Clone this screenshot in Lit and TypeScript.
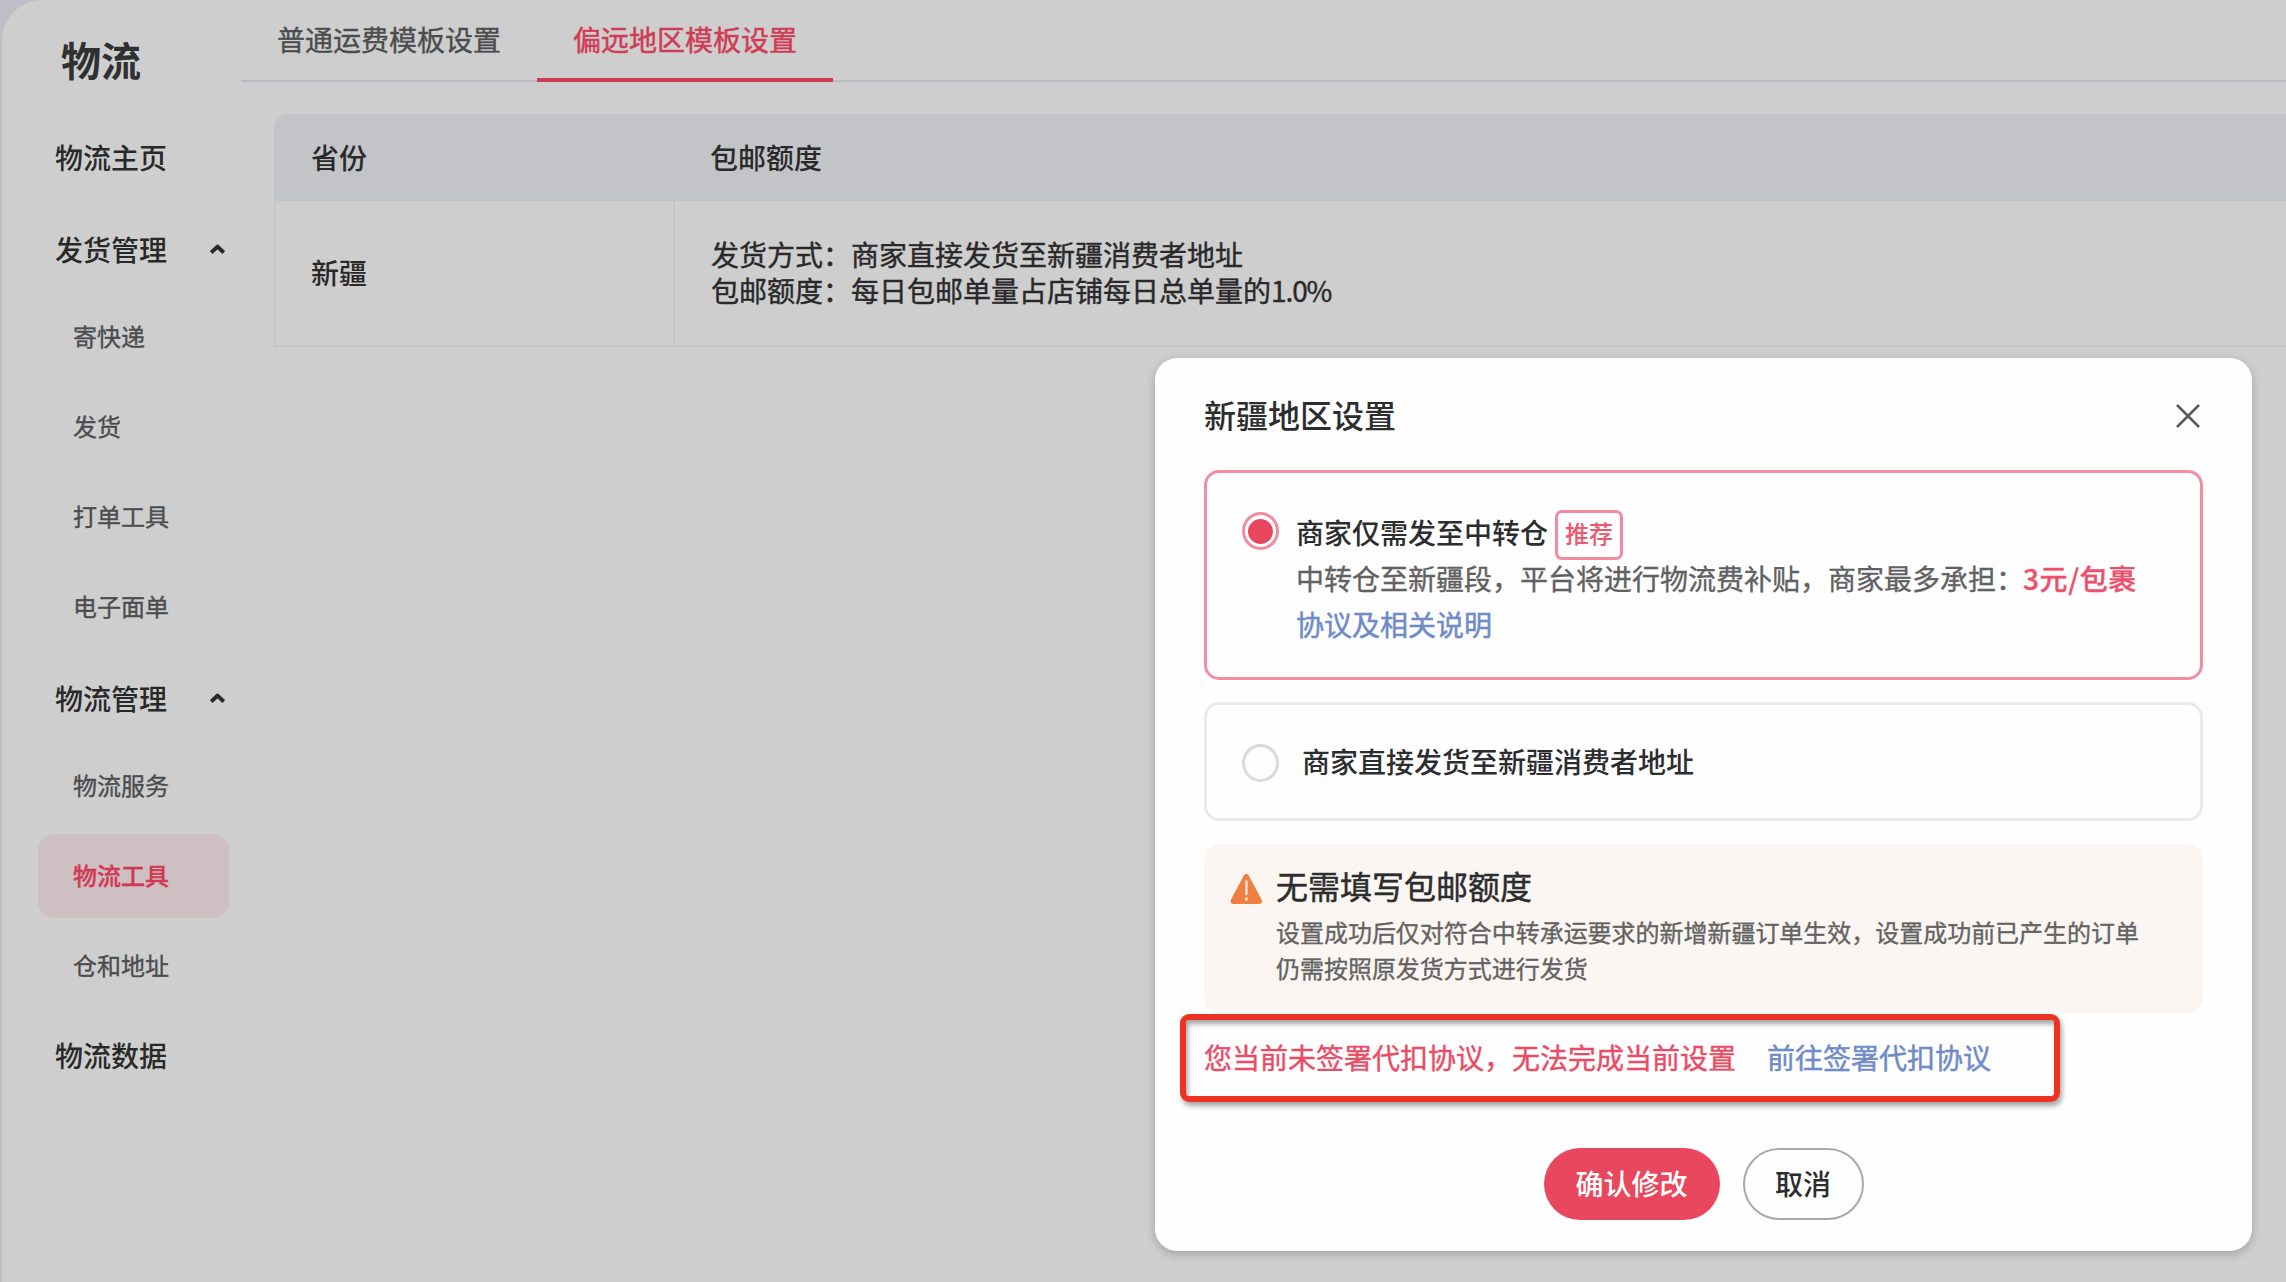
import { LitElement, html, css } from "lit";
import { customElement } from "lit/decorators.js";
import { classMap } from "lit/directives/class-map.js";

interface NavItem {
  label: string;
  kind: "top" | "group" | "sub";
  active?: boolean;
}

const NAV: NavItem[] = [
  { label: "物流主页", kind: "top" },
  { label: "发货管理", kind: "group" },
  { label: "寄快递", kind: "sub" },
  { label: "发货", kind: "sub" },
  { label: "打单工具", kind: "sub" },
  { label: "电子面单", kind: "sub" },
  { label: "物流管理", kind: "group" },
  { label: "物流服务", kind: "sub" },
  { label: "物流工具", kind: "sub", active: true },
  { label: "仓和地址", kind: "sub" },
  { label: "物流数据", kind: "top" },
];

@customElement("side-nav")
class SideNav extends LitElement {
  static styles = css`
    :host {
      display: block;
      box-sizing: border-box;
      width: 239px;
      flex: none;
      padding: 29px 0 0 36px;
    }
    .title {
      margin-left: 23px;
      height: 60px;
      line-height: 60px;
      font-size: 40px;
      font-weight: 600;
      color: #2f3031;
    }
    .list {
      display: flex;
      flex-direction: column;
      margin-top: 27px;
    }
    .item {
      display: flex;
      align-items: center;
      box-sizing: border-box;
      width: 191px;
      height: 84px;
      margin-bottom: 6px;
      padding-bottom: 3px;
      border-radius: 16px;
    }
    .top,
    .group {
      padding-left: 17px;
      font-size: 28px;
      font-weight: 500;
      color: #29292a;
    }
    .group {
      margin-top: 2px;
      margin-bottom: 3px;
    }
    .sub {
      padding-left: 35px;
      font-size: 24px;
      color: #4b4c4d;
      -webkit-text-stroke: 0.35px currentColor;
    }
    .active {
      background: #cdbfc2;
      color: #d13a53;
      font-weight: 500;
    }
    .chev {
      margin-left: 43px;
      margin-top: 1px;
      flex: none;
    }
  `;
  render() {
    return html`
      <div class="title">物流</div>
      <nav class="list">
        ${NAV.map(
          (n) => html`<div class=${classMap({ item: true, [n.kind]: true, active: !!n.active })}>
            <span>${n.label}</span>
            ${n.kind === "group"
              ? html`<svg class="chev" width="15" height="12" viewBox="0 0 15 12" fill="none">
                  <path d="M1.2 9.6 L7.5 3.6 L13.8 9.6" stroke="#29292a" stroke-width="4" stroke-linejoin="round" />
                </svg>`
              : ""}
          </div>`
        )}
      </nav>
    `;
  }
}

@customElement("template-page")
class TemplatePage extends LitElement {
  static styles = css`
    :host {
      display: block;
      flex: 1;
      min-width: 0;
    }
    .tabs {
      display: flex;
      height: 82px;
      box-sizing: border-box;
      border-bottom: 2px solid #b9bac1;
      color: #4b4c4d;
      font-size: 28px;
    }
    .tab {
      box-sizing: border-box;
      width: 296px;
      height: 82px;
      padding-left: 36px;
      line-height: 79px;
      -webkit-text-stroke: 0.35px currentColor;
    }
    .tab.on {
      color: #cf3d55;
      border-bottom: 4px solid #cb3e54;
      -webkit-text-stroke: 0.5px currentColor;
    }
    .table {
      margin: 32px 0 0 33px;
      font-size: 28px;
      color: #29292a;
    }
    .row {
      display: grid;
      grid-template-columns: 399px 1fr;
    }
    .head {
      height: 87px;
      background: #c2c4c8;
      border-radius: 14px 0 0 0;
      font-weight: 500;
      line-height: 86px;
    }
    .head > div {
      padding-left: 37px;
    }
    .body {
      box-sizing: border-box;
      height: 146px;
      border-left: 2px solid #c5c5c7;
      border-bottom: 2px solid #c5c5c7;
    }
    .name {
      box-sizing: border-box;
      padding-left: 35px;
      font-weight: 500;
      line-height: 143px;
      border-right: 2px solid #c5c5c7;
    }
    .detail {
      padding: 35px 0 0 36px;
      line-height: 36px;
      -webkit-text-stroke: 0.4px currentColor;
    }
    .num {
      letter-spacing: -1.1px;
    }
  `;
  render() {
    return html`
      <div class="tabs">
        <div class="tab">普通运费模板设置</div>
        <div class="tab on">偏远地区模板设置</div>
      </div>
      <div class="table">
        <div class="row head"><div>省份</div><div>包邮额度</div></div>
        <div class="row body">
          <div class="name">新疆</div>
          <div class="detail">
            <div>发货方式：商家直接发货至新疆消费者地址</div>
            <div>包邮额度：每日包邮单量占店铺每日总单量的<span class="num">1.0%</span></div>
          </div>
        </div>
      </div>
    `;
  }
}

@customElement("region-dialog")
class RegionDialog extends LitElement {
  static styles = css`
    :host {
      display: flex;
      flex-direction: column;
      box-sizing: border-box;
      padding: 0 49px;
      border-radius: 22px;
      background: #fefefe;
      box-shadow: 0 3px 10px rgba(0, 0, 0, 0.22);
      font-size: 28px;
      color: #2c2d2e;
    }
    .header {
      display: flex;
      justify-content: space-between;
      align-items: center;
      height: 112px;
    }
    .heading {
      font-size: 32px;
      font-weight: 500;
    }
    .close {
      margin: 4px 2px 0 0;
    }
    .option {
      box-sizing: border-box;
      display: flex;
      border-radius: 15px;
    }
    .option.first {
      height: 210px;
      padding: 36px 0 0 35px;
      border: 3px solid #f28c9f;
    }
    .option.second {
      height: 119px;
      margin-top: 22px;
      padding-left: 35px;
      align-items: center;
      border: 3px solid #e9eaee;
    }
    .radio {
      box-sizing: border-box;
      display: flex;
      align-items: center;
      justify-content: center;
      flex: none;
      width: 37px;
      height: 38px;
      border: 3px solid #d9dade;
      border-radius: 50%;
      margin-top: 3px;
    }
    .second .radio {
      margin-top: 2px;
    }
    .radio.on {
      border-color: #f18b9d;
    }
    .dot {
      width: 25px;
      height: 25px;
      border-radius: 50%;
      background: #e9475f;
    }
    .copy {
      margin-left: 17px;
    }
    .line {
      display: flex;
      height: 46px;
      line-height: 46px;
      white-space: nowrap;
    }
    .name {
      font-weight: 500;
    }
    .second .name {
      margin-left: 23px;
      margin-top: -1px;
    }
    .tag {
      box-sizing: border-box;
      width: 68px;
      height: 50px;
      margin: 1px 0 -5px 7px;
      border: 3px solid #f18a9c;
      border-radius: 7px;
      color: #ec5870;
      font-size: 24px;
      font-weight: 500;
      line-height: 40px;
      text-align: center;
    }
    .muted {
      color: #606162;
      -webkit-text-stroke: 0.35px currentColor;
    }
    .price {
      color: #ee506c;
      font-weight: 500;
      letter-spacing: 0.6px;
      margin-left: -1px;
    }
    .link {
      color: #6f8bc8;
      -webkit-text-stroke: 0.5px currentColor;
    }
    .notice {
      box-sizing: border-box;
      display: flex;
      height: 169px;
      margin-top: 23px;
      padding: 18px 0 0 26px;
      border-radius: 15px;
      background: #fbf6f2;
    }
    .warn {
      flex: none;
      margin: 11px 13px 0 0;
    }
    .notice-title {
      height: 48px;
      line-height: 46px;
      font-size: 32px;
      -webkit-text-stroke: 0.5px currentColor;
    }
    .notice-text {
      margin-top: 4px;
      font-size: 24px;
      letter-spacing: -0.03px;
      line-height: 36px;
      color: #636363;
      white-space: nowrap;
      -webkit-text-stroke: 0.35px currentColor;
    }
    .agreement {
      box-sizing: border-box;
      display: flex;
      gap: 31px;
      width: 880px;
      height: 88px;
      margin: 1px 0 0 -24px;
      padding-left: 18px;
      border: 6px solid #ec3323;
      border-radius: 9px;
      box-shadow: 2px 4px 5px rgba(0, 0, 0, 0.35), inset 2px 4px 5px rgba(0, 0, 0, 0.35);
      line-height: 75px;
      white-space: nowrap;
    }
    .error {
      color: #ea4c66;
      -webkit-text-stroke: 0.4px currentColor;
    }
    .actions {
      display: flex;
      justify-content: center;
      gap: 23px;
      margin-top: 46px;
    }
    .btn {
      box-sizing: border-box;
      width: 176px;
      height: 72px;
      border-radius: 36px;
      background: #e9475d;
      color: #fff;
      line-height: 70px;
      font-weight: 500;
      text-align: center;
    }
    .btn.ghost {
      width: 121px;
      border: 2px solid #a9a9a9;
      background: transparent;
      color: #2c2d2e;
      line-height: 66px;
    }
  `;
  render() {
    return html`
      <div class="header">
        <div class="heading">新疆地区设置</div>
        <svg class="close" width="26" height="26" viewBox="0 0 26 26" fill="none">
          <path d="M2 2 L24 24 M24 2 L2 24" stroke="#58595a" stroke-width="2.5" />
        </svg>
      </div>
      <div class="option first">
        <div class="radio on"><div class="dot"></div></div>
        <div class="copy">
          <div class="line"><span class="name">商家仅需发至中转仓</span><span class="tag">推荐</span></div>
          <div class="line muted">
            <span>中转仓至新疆段，平台将进行物流费补贴，商家最多承担：</span><span class="price">3元/包裹</span>
          </div>
          <div class="line link">协议及相关说明</div>
        </div>
      </div>
      <div class="option second">
        <div class="radio"></div>
        <div class="name">商家直接发货至新疆消费者地址</div>
      </div>
      <div class="notice">
        <svg class="warn" width="33" height="32" viewBox="0 0 33 32">
          <path d="M13.9 2.3 Q16.2 -0.8 18.5 2.3 L31.6 26.6 Q33 30.8 29 31 H3.6 Q-0.4 30.8 1 26.6 Z" fill="#ee8141" />
          <path d="M16.4 8.5 V21" stroke="#fbdcc6" stroke-width="2.6" stroke-linecap="round" />
          <circle cx="16.4" cy="26" r="1.7" fill="#fbdcc6" />
        </svg>
        <div>
          <div class="notice-title">无需填写包邮额度</div>
          <div class="notice-text">
            设置成功后仅对符合中转承运要求的新增新疆订单生效，设置成功前已产生的订单<br />仍需按照原发货方式进行发货
          </div>
        </div>
      </div>
      <div class="agreement">
        <span class="error">您当前未签署代扣协议，无法完成当前设置</span>
        <span class="link">前往签署代扣协议</span>
      </div>
      <div class="actions">
        <div class="btn">确认修改</div>
        <div class="btn ghost">取消</div>
      </div>
    `;
  }
}

@customElement("app-root")
class AppRoot extends LitElement {
  static styles = css`
    :host {
      display: block;
      position: relative;
      box-sizing: border-box;
      width: 2286px;
      height: 1282px;
      overflow: hidden;
      padding-left: 2px;
      background: #bdbec8;
      font-family: "Noto Sans CJK SC", "Noto Sans", sans-serif;
    }
    .panel {
      display: flex;
      height: 1282px;
      border-top-left-radius: 40px;
      background: #cecece;
    }
    .dialog {
      position: absolute;
      left: 1155px;
      top: 358px;
      width: 1097px;
      height: 893px;
    }
  `;
  render() {
    return html`
      <div class="panel">
        <side-nav></side-nav>
        <template-page></template-page>
      </div>
      <region-dialog class="dialog"></region-dialog>
    `;
  }
}
